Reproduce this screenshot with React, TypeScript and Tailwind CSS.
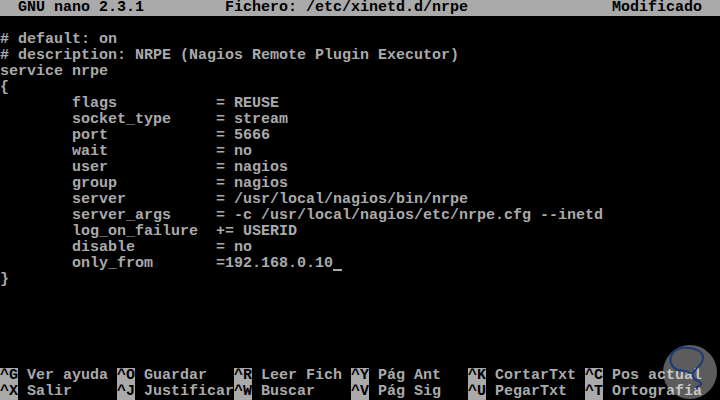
import React from "react";

const pad = (s: string, n: number) => s.padEnd(n, " ");

const settings: [string, string][] = [
	["flags", "= REUSE"],
	["socket_type", "= stream"],
	["port", "= 5666"],
	["wait", "= no"],
	["user", "= nagios"],
	["group", "= nagios"],
	["server", "= /usr/local/nagios/bin/nrpe"],
	["server_args", "= -c /usr/local/nagios/etc/nrpe.cfg --inetd"],
	["log_on_failure", "+= USERID"],
	["disable", "= no"],
];

const shortcuts: [string, string][][] = [
	[
		["^G", "Ver ayuda"],
		["^O", "Guardar"],
		["^R", "Leer Fich"],
		["^Y", "Pág Ant"],
		["^K", "CortarTxt"],
		["^C", "Pos actual"],
	],
	[
		["^X", "Salir"],
		["^J", "Justificar"],
		["^W", "Buscar"],
		["^V", "Pág Sig"],
		["^U", "PegarTxt"],
		["^T", "Ortografía"],
	],
];

function Line({ children }: { children?: React.ReactNode }) {
	return <div className="h-[16px] whitespace-pre">{children ?? " "}</div>;
}

function Watermark() {
	return (
		<svg
			className="absolute left-[662px] top-[344px]"
			width="56"
			height="56"
			viewBox="0 0 56 56"
		>
			<circle cx="28" cy="28" r="27" fill="#ffffff" fillOpacity="0.36" />
			<path
				d="M16 26 C10 24 7 18 9 12 C12 5 20 3 27 4 C35 5 42 8 41 15 C40 21 34 24 31 29 C30 32 32 35 34 36 C39 38 41 40 37 42 C35 43 33 43 35 44"
				fill="none"
				stroke="#1c3b78"
				strokeWidth="2"
				strokeLinecap="round"
			/>
			<path
				d="M16 26 C20 27 25 27 29 29"
				fill="none"
				stroke="#1c3b78"
				strokeWidth="2"
				strokeLinecap="round"
			/>
		</svg>
	);
}

export default function App() {
	return (
		<div
			className="relative w-[720px] h-[400px] overflow-hidden bg-black text-[#aaaaaa] text-[15px] leading-[16px] font-bold"
			style={{ fontFamily: '"Liberation Mono", "DejaVu Sans Mono", monospace' }}
		>
			<div className="h-[16px] whitespace-pre bg-[#aaaaaa] text-black">
				{pad("  GNU nano 2.3.1", 25) +
					pad("Fichero: /etc/xinetd.d/nrpe", 43) +
					pad("Modificado", 12)}
			</div>
			<Line />
			<Line>{"# default: on"}</Line>
			<Line>{"# description: NRPE (Nagios Remote Plugin Executor)"}</Line>
			<Line>{"service nrpe"}</Line>
			<Line>{"{"}</Line>
			{settings.map(([k, v]) => (
				<Line key={k}>{"        " + pad(k, 16) + v}</Line>
			))}
			<Line>
				{"        " + pad("only_from", 16) + "=192.168.0.10"}
				<span className="inline-block w-[9px] h-[16px] align-top relative">
					<span className="absolute left-0 right-0 bottom-[1px] h-[2px] bg-[#aaaaaa]" />
				</span>
			</Line>
			<Line>{"}"}</Line>
			<Line />
			<Line />
			<Line />
			<Line />
			<Line />
			{shortcuts.map((row, i) => (
				<div key={i} className="flex h-[16px] whitespace-pre">
					{row.map(([key, label]) => (
						<div key={key} className="flex w-[117px]">
							<span className="h-[16px] w-[18px] bg-[#aaaaaa] text-black">{key}</span>
							<span>{" " + label}</span>
						</div>
					))}
				</div>
			))}
			<Watermark />
		</div>
	);
}
